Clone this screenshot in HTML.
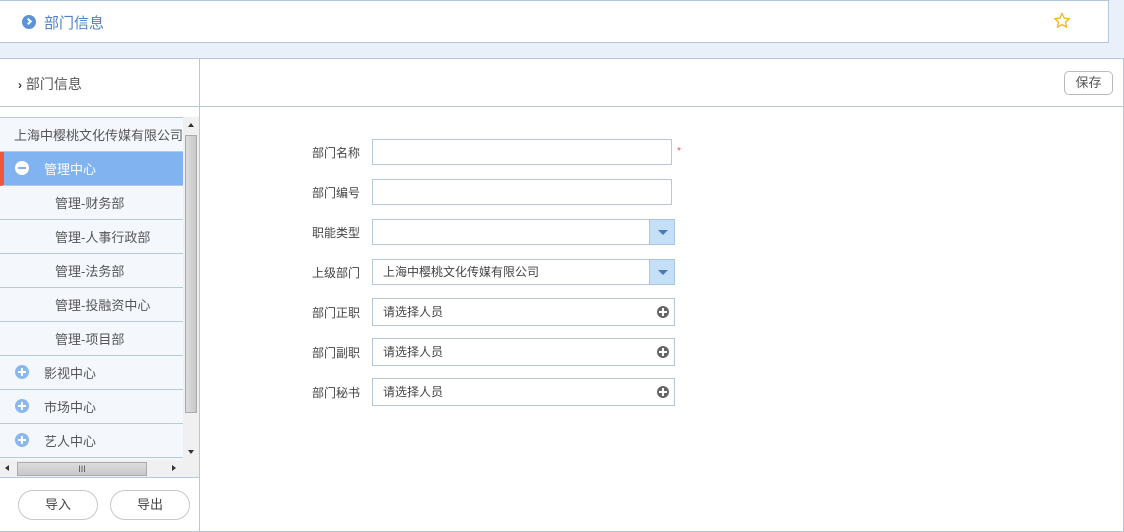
<!DOCTYPE html>
<html><head><meta charset="utf-8"><style>
*{box-sizing:border-box;margin:0;padding:0}
body{width:1124px;height:532px;background:#e9f0f9;font-family:"Liberation Sans","Noto Sans CJK SC",sans-serif;font-size:13px;color:#555;position:relative;overflow:hidden}
.abs{position:absolute}
.top{left:0;top:0;width:1109px;height:43px;background:#fff;border:1px solid #b5c7dc;border-left:none}
.main{left:0;top:58px;width:1124px;height:474px;background:#fff;border-top:1px solid #b5c7dc;border-right:1px solid #b5c7dc;border-bottom:1px solid #b5c7dc}
.row{position:absolute;left:0;width:183px;height:34px;border-bottom:1px solid #b8c9dc;line-height:36px;background:#f4f8fd;color:#555;white-space:nowrap;overflow:hidden}
.lbl{position:absolute;left:312px;font-size:12px;color:#444}
.inp{position:absolute;left:372px;width:300px;height:26px;border:1px solid #b5c7dc;background:#fff;font-size:12px;line-height:24px;padding-left:10px;color:#444}
.dd{position:absolute;right:-26px;top:-1px;width:26px;height:26px;background:#c5dff7;border:1px solid #a9c6e6}
.dd:after{content:"";position:absolute;left:8px;top:10px;border-left:5px solid transparent;border-right:5px solid transparent;border-top:5px solid #4a7ab3}
.plus{position:absolute;right:5px;top:7px;width:12px;height:12px;border-radius:50%;background:#666}
.plus:before{content:"";position:absolute;left:2px;top:5px;width:8px;height:2px;background:#fff}
.plus:after{content:"";position:absolute;left:5px;top:2px;width:2px;height:8px;background:#fff}
.ci{position:absolute;left:15px;top:9px;width:14px;height:14px;border-radius:50%;background:#8bb8ef}
.ci:before{content:"";position:absolute;left:3px;top:6px;width:8px;height:2px;background:#fff}
.ci.p:after{content:"";position:absolute;left:6px;top:3px;width:2px;height:8px;background:#fff}
.btn{position:absolute;top:490px;width:80px;height:30px;border:1px solid #c8c8c8;border-radius:15px;text-align:center;line-height:28px;color:#444;background:#fff}
</style></head><body>
<div class="abs top">
 <div class="abs" style="left:22px;top:14px;width:14px;height:14px;border-radius:50%;background:#5d92d8"></div>
 <div class="abs" style="left:26px;top:18px;width:5px;height:5px;border-right:2px solid #fff;border-top:2px solid #fff;transform:rotate(45deg)"></div>
 <div class="abs" style="left:44px;top:11px;font-size:15px;color:#4f82c6">部门信息</div>
 <svg class="abs" style="left:1053px;top:11px" width="18" height="18" viewBox="0 0 18 18"><path d="M9 1.5l2.2 4.6 5 .6-3.7 3.4 1 5-4.5-2.5-4.5 2.5 1-5L1.8 6.7l5-.6z" fill="none" stroke="#f5b324" stroke-width="1.3"/></svg>
</div>
<div class="abs main">
 <div class="abs" style="left:199px;top:0;width:1px;height:473px;background:#b5c7dc"></div>
 <div class="abs" style="left:0;top:47px;width:1123px;height:1px;background:#b5c7dc"></div>
 <div class="abs" style="left:18px;top:15px;font-size:14px;color:#555"><b style="font-size:12px;color:#333">›</b> 部门信息</div>
 <div class="abs" style="left:1064px;top:12px;width:49px;height:24px;border:1px solid #bbb;border-radius:5px;text-align:center;line-height:22px;color:#555">保存</div>
</div>
<!-- tree -->
<div class="abs" style="left:0;top:117px;width:183px;height:343px;background:#f4f8fd;border-top:1px solid #b8c9dc;overflow:hidden">
 <div class="row" style="top:0;padding-left:14px">上海中樱桃文化传媒有限公司</div>
 <div class="row" style="top:34px;background:#80b3ef;color:#fff;padding-left:40px;border-left:4px solid #f0553d"><span class="ci" style="background:#fff;left:11px"></span><span style="position:absolute;left:14px;top:15px;width:8px;height:2px;background:#80b3ef"></span>管理中心</div>
 <div class="row" style="top:68px;padding-left:55px">管理-财务部</div>
 <div class="row" style="top:102px;padding-left:55px">管理-人事行政部</div>
 <div class="row" style="top:136px;padding-left:55px">管理-法务部</div>
 <div class="row" style="top:170px;padding-left:55px">管理-投融资中心</div>
 <div class="row" style="top:204px;padding-left:55px">管理-项目部</div>
 <div class="row" style="top:238px;padding-left:44px"><span class="ci p"></span>影视中心</div>
 <div class="row" style="top:272px;padding-left:44px"><span class="ci p"></span>市场中心</div>
 <div class="row" style="top:306px;padding-left:44px"><span class="ci p"></span>艺人中心</div>
</div>
<div class="abs" style="left:183px;top:117px;width:16px;height:343px;background:#f0f0f0">
 <div class="abs" style="left:2px;top:18px;width:12px;height:278px;background:linear-gradient(90deg,#ddd,#c8c8c8);border:1px solid #aaa"></div>
 <div class="abs" style="left:5px;top:6px;border-left:3px solid transparent;border-right:3px solid transparent;border-bottom:4px solid #333"></div>
 <div class="abs" style="left:5px;top:333px;border-left:3px solid transparent;border-right:3px solid transparent;border-top:4px solid #333"></div>
</div>
<div class="abs" style="left:0;top:460px;width:199px;height:18px;background:#f0f0f0;border-bottom:1px solid #b5c7dc">
 <div class="abs" style="left:17px;top:2px;width:130px;height:14px;background:linear-gradient(#ddd,#c8c8c8);border:1px solid #aaa;font-size:9px;text-align:center;line-height:12px">III</div>
 <div class="abs" style="left:5px;top:5px;border-top:3px solid transparent;border-bottom:3px solid transparent;border-right:4px solid #333"></div>
 <div class="abs" style="left:172px;top:5px;border-top:3px solid transparent;border-bottom:3px solid transparent;border-left:4px solid #333"></div>
</div>
<div class="btn" style="left:18px">导入</div>
<div class="btn" style="left:110px">导出</div>
<!-- form -->
<div class="lbl" style="top:144px">部门名称</div><div class="inp" style="top:139px"></div><div class="abs" style="left:677px;top:146px;color:#f05050;font-size:10px">*</div>
<div class="lbl" style="top:184px">部门编号</div><div class="inp" style="top:179px"></div>
<div class="lbl" style="top:224px">职能类型</div><div class="inp" style="top:219px;width:278px"><div class="dd"></div></div>
<div class="lbl" style="top:264px">上级部门</div><div class="inp" style="top:259px;width:278px">上海中樱桃文化传媒有限公司<div class="dd"></div></div>
<div class="lbl" style="top:304px">部门正职</div><div class="inp" style="top:298px;width:303px;height:28px;line-height:26px">请选择人员<span class="plus"></span></div>
<div class="lbl" style="top:344px">部门副职</div><div class="inp" style="top:338px;width:303px;height:28px;line-height:26px">请选择人员<span class="plus"></span></div>
<div class="lbl" style="top:384px">部门秘书</div><div class="inp" style="top:378px;width:303px;height:28px;line-height:26px">请选择人员<span class="plus"></span></div>
</body></html>
